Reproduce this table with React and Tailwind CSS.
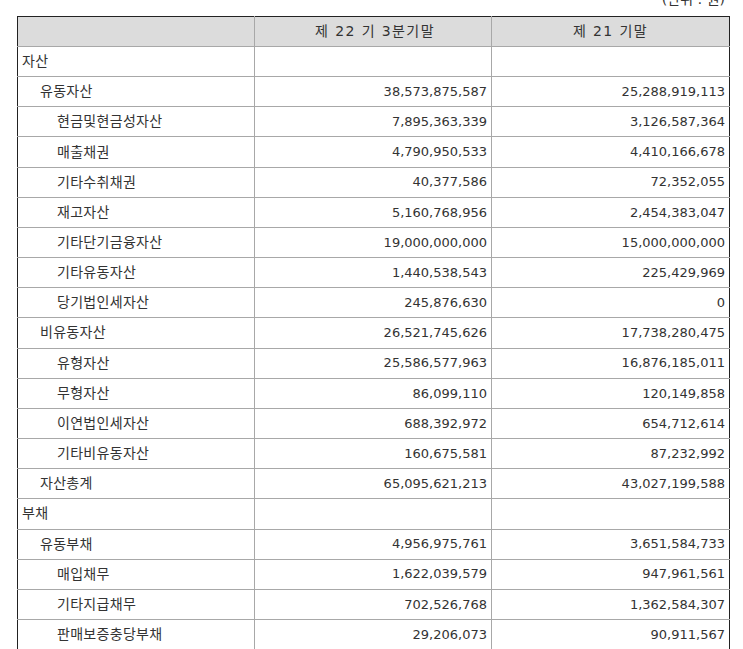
import React from "react";

const rows = [
  ["자산", 0, "", ""],
  ["유동자산", 1, "38,573,875,587", "25,288,919,113"],
  ["현금및현금성자산", 2, "7,895,363,339", "3,126,587,364"],
  ["매출채권", 2, "4,790,950,533", "4,410,166,678"],
  ["기타수취채권", 2, "40,377,586", "72,352,055"],
  ["재고자산", 2, "5,160,768,956", "2,454,383,047"],
  ["기타단기금융자산", 2, "19,000,000,000", "15,000,000,000"],
  ["기타유동자산", 2, "1,440,538,543", "225,429,969"],
  ["당기법인세자산", 2, "245,876,630", "0"],
  ["비유동자산", 1, "26,521,745,626", "17,738,280,475"],
  ["유형자산", 2, "25,586,577,963", "16,876,185,011"],
  ["무형자산", 2, "86,099,110", "120,149,858"],
  ["이연법인세자산", 2, "688,392,972", "654,712,614"],
  ["기타비유동자산", 2, "160,675,581", "87,232,992"],
  ["자산총계", 1, "65,095,621,213", "43,027,199,588"],
  ["부채", 0, "", ""],
  ["유동부채", 1, "4,956,975,761", "3,651,584,733"],
  ["매입채무", 2, "1,622,039,579", "947,961,561"],
  ["기타지급채무", 2, "702,526,768", "1,362,584,307"],
  ["판매보증충당부채", 2, "29,206,073", "90,911,567"],
];

const indent = ["pl-[4px]", "pl-[22px]", "pl-[39px]"];

export default function App() {
  return (
    <div
      className="w-[743px] h-[649px] overflow-hidden bg-white text-[13px] text-[#333]"
      style={{ fontFamily: '"DejaVu Sans", "Noto Sans CJK KR", sans-serif' }}
    >
      <div className="h-[16px] overflow-hidden flex justify-end pr-[18px]">
        <span className="leading-[14px] -mt-[8px] text-[14px]">(단위 : 원)</span>
      </div>
      <table className="ml-[17px] w-[712px] border-collapse table-fixed border border-[#222]">
        <colgroup>
          <col className="w-[237px]" />
          <col className="w-[237px]" />
          <col className="w-[238px]" />
        </colgroup>
        <thead>
          <tr className="h-[30px] bg-[#dcdcdc]">
            <th className="border border-[#a8a8a8] border-t-[#222] border-l-[#222] font-normal p-0"></th>
            <th className="border border-[#a8a8a8] border-t-[#222] font-normal text-center p-0 pl-[4px] text-[14px] tracking-[1.4px]">제 22 기 3분기말</th>
            <th className="border border-[#a8a8a8] border-t-[#222] border-r-[#222] font-normal text-center p-0 text-[14px] tracking-[1.4px]">제 21 기말</th>
          </tr>
        </thead>
        <tbody>
          {rows.map(([label, lvl, a, b], i) => (
            <tr key={i} className="h-[30.16px]">
              <td className={`border border-[#a8a8a8] border-l-[#222] p-0 text-[14px] tracking-[0.3px] ${indent[lvl]}`}>{label}</td>
              <td className="border border-[#a8a8a8] p-0 pr-[4px] text-right">{a}</td>
              <td className="border border-[#a8a8a8] border-r-[#222] p-0 pr-[4px] text-right">{b}</td>
            </tr>
          ))}
        </tbody>
      </table>
    </div>
  );
}
